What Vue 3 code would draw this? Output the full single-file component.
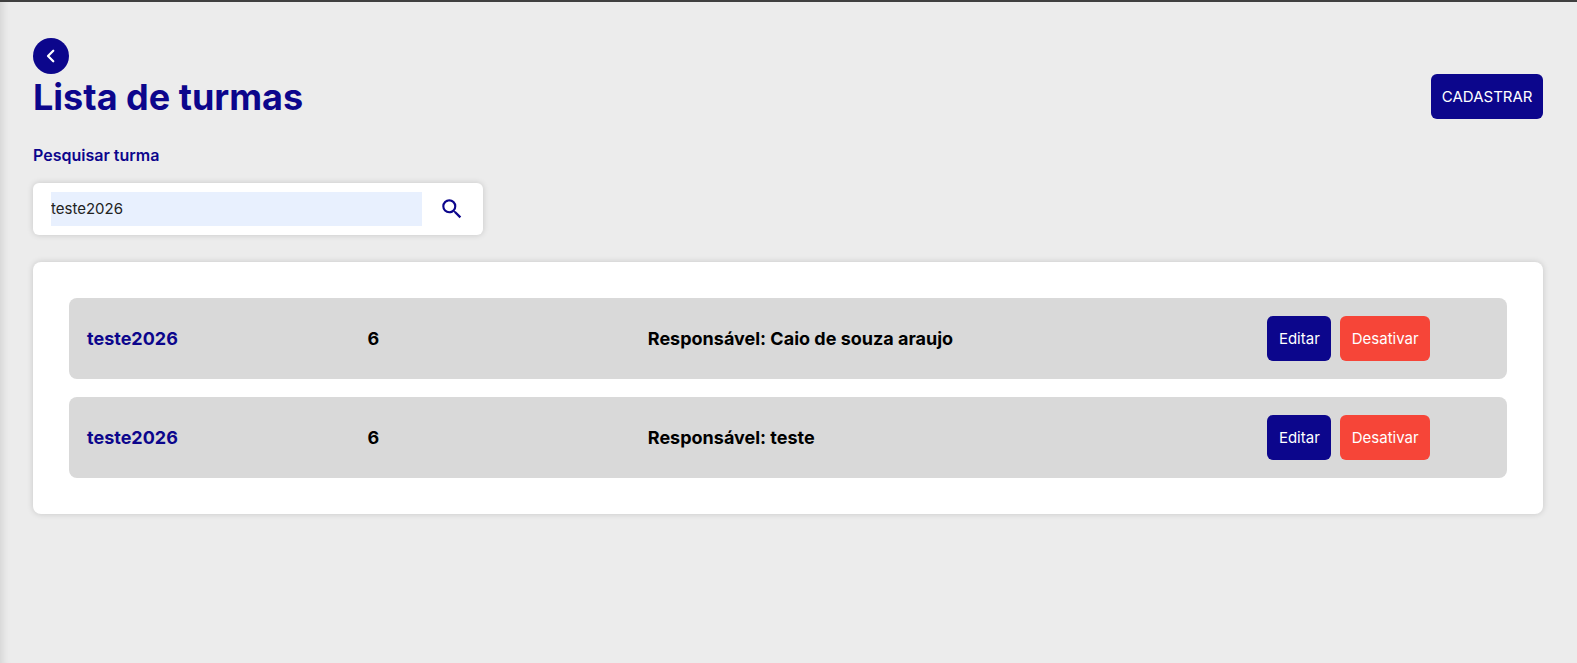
<template>
  <div class="page">
    <button class="back-btn" aria-label="Voltar">
      <svg width="18" height="18" viewBox="0 0 24 24" fill="none" stroke="currentColor" stroke-width="3" stroke-linecap="round" stroke-linejoin="round"><path d="M15 5l-7 7 7 7"/></svg>
    </button>
    <div class="title-row">
      <h1>Lista de turmas</h1>
      <button class="btn btn-primary btn-register">CADASTRAR</button>
    </div>

    <label class="search-label" for="search">Pesquisar turma</label>
    <div class="search-box">
      <input id="search" v-model="search" type="text" />
      <svg class="search-icon" width="26" height="26" viewBox="0 0 24 24" fill="currentColor"><path d="M15.5 14h-.79l-.28-.27A6.47 6.47 0 0 0 16 9.5 6.5 6.5 0 1 0 9.5 16c1.61 0 3.09-.59 4.23-1.57l.27.28v.79l5 4.99L20.49 19l-4.99-5zm-6 0C7.01 14 5 11.99 5 9.5S7.01 5 9.5 5 14 7.01 14 9.5 11.99 14 9.5 14z"/></svg>
    </div>

    <div class="card">
      <div v-for="turma in turmas" :key="turma.responsavel" class="row">
        <span class="name">{{ turma.nome }}</span>
        <span class="info">{{ turma.qtd }}</span>
        <span class="info">Responsável: {{ turma.responsavel }}</span>
        <div class="actions">
          <button class="btn btn-primary">Editar</button>
          <button class="btn btn-danger">Desativar</button>
        </div>
      </div>
    </div>
  </div>
</template>

<script setup>
import { ref } from 'vue'

const search = ref('teste2026')
const turmas = [
  { nome: 'teste2026', qtd: 6, responsavel: 'Caio de souza araujo' },
  { nome: 'teste2026', qtd: 6, responsavel: 'teste' },
]
</script>

<style>
html, body {
  margin: 0;
  background: #ececec;
}
</style>

<style scoped>
.page {
  box-sizing: border-box;
  min-height: 663px;
  padding: 36px 34px 0 33px;
  background: #ececec;
  border-top: 2px solid #404040;
  box-shadow: inset 10px 0 8px -8px rgba(0, 0, 0, 0.12);
  font-family: Inter, "Liberation Sans", sans-serif;
}

.back-btn {
  display: flex;
  align-items: center;
  justify-content: center;
  width: 36px;
  height: 36px;
  padding: 0;
  border: none;
  border-radius: 50%;
  background: #0c068c;
  color: white;
}

.title-row {
  display: flex;
  justify-content: space-between;
  align-items: center;
  height: 45px;
}

h1 {
  margin: 0;
  font-size: 36px;
  font-weight: 700;
  color: #0c068c;
}

.btn {
  height: 45px;
  padding: 0 11.5px;
  border: none;
  border-radius: 6px;
  color: white;
  font-family: inherit;
  font-size: 15px;
}

.btn-register {
  padding: 0 10.5px;
}

.btn-primary {
  background: #0c068c;
}

.btn-danger {
  background: #f64538;
}

.search-label {
  display: block;
  margin-top: 26px;
  font-size: 16px;
  line-height: 20px;
  font-weight: 600;
  color: #0c068c;
}

.search-box {
  display: flex;
  align-items: center;
  justify-content: space-between;
  box-sizing: border-box;
  width: 450px;
  height: 52px;
  margin-top: 18px;
  padding: 0 18px;
  background: white;
  border-radius: 6px;
  box-shadow: 0 0 6px rgba(0, 0, 0, 0.16);
}

.search-box input {
  box-sizing: border-box;
  width: 371px;
  height: 34px;
  padding: 0 0 2px;
  border: none;
  outline: none;
  background: #e8f0fe;
  color: #222;
  font-family: inherit;
  font-size: 15px;
}

.search-icon {
  color: #0c068c;
}

.card {
  display: flex;
  flex-direction: column;
  gap: 18px;
  margin-top: 27px;
  padding: 36px;
  background: white;
  border-radius: 8px;
  box-shadow: 0 0 6px rgba(0, 0, 0, 0.16);
}

.row {
  display: grid;
  grid-template-columns: repeat(5, minmax(0, 1fr));
  align-items: center;
  height: 81px;
  padding: 0 18px;
  background: #d9d9d9;
  border-radius: 8px;
}

.name {
  font-size: 18px;
  font-weight: 700;
  color: #0c068c;
}

.info {
  font-size: 18px;
  font-weight: 700;
  color: #000;
  white-space: nowrap;
}

.actions {
  grid-column: 5;
  display: flex;
  justify-content: center;
  gap: 9px;
}
</style>
